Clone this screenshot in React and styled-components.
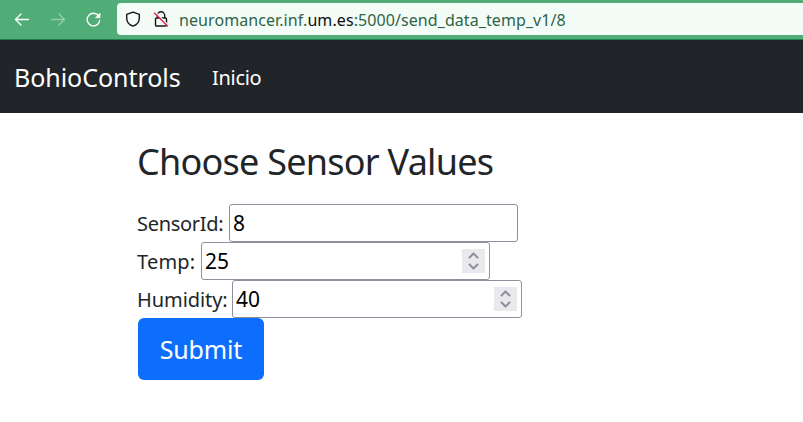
import React from "react";
import styled, { createGlobalStyle } from "styled-components";

const Global = createGlobalStyle`
  *, *::before, *::after { box-sizing: border-box; }
  html, body { margin: 0; background: #fff; overflow: hidden; }
  body { font-family: "Noto Sans", sans-serif; font-size: 20px; color: #212529; }
`;
const Page = styled.div`
  height: 422px;
  display: flex;
  flex-direction: column;
`;
const Toolbar = styled.div`
  height: 40px;
  flex: none;
  display: flex;
  align-items: flex-start;
  background: #50ad78;
  border-bottom: 1px solid #1c8048;
`;
const NavIcons = styled.div`
  width: 117px;
  height: 39px;
  display: flex;
  gap: 20px;
  padding: 12px 0 0 14px;
  color: #fff;
`;
const Icon = styled.svg`
  width: 16px;
  height: 16px;
  flex: none;
  fill: none;
  stroke: currentColor;
  stroke-width: 1.4;
  stroke-linecap: round;
  stroke-linejoin: round;
  overflow: visible;
  opacity: ${(p) => (p.$dim ? 0.4 : 1)};
`;
const UrlBar = styled.div`
  flex: 1;
  height: 32px;
  margin-top: 3px;
  padding: 8px 0 0 8px;
  display: flex;
  gap: 12px;
  background: #f4fcf8;
  border-radius: 4px 0 0 4px;
  color: #15141a;
`;
const Url = styled.span`
  margin: -3px 0 0 -2px;
  font-size: 16px;
  line-height: 24px;
  white-space: nowrap;
  color: #2f6346;
  letter-spacing: 0.08px;
`;
const Domain = styled.span`
  color: #0c0c0d;
`;
const Navbar = styled.nav`
  height: 73px;
  flex: none;
  display: flex;
  align-items: center;
  padding: 1px 0 0 14px;
  background: #212529;
  color: #fff;
`;
const Brand = styled.a`
  width: 198px;
  font-size: 25px;
  letter-spacing: -0.04px;
`;
const NavLink = styled.a`
  font-size: 20px;
  letter-spacing: -0.3px;
`;
const Main = styled.main`
  padding: 24px 0 0 137px;
`;
const Title = styled.h1`
  margin: 0 0 17px;
  font-size: 36px;
  font-weight: 400;
  letter-spacing: -0.75px;
  line-height: 50px;
  white-space: nowrap;
`;
const Row = styled.label`
  height: 38px;
  display: flex;
  align-items: center;
`;
const LabelText = styled.span`
  width: ${(p) => p.$width}px;
  letter-spacing: ${(p) => p.$spacing}px;
  white-space: nowrap;
`;
const Field = styled.span`
  width: ${(p) => p.$width}px;
  height: 38px;
  display: flex;
  align-items: center;
  justify-content: space-between;
  padding: 0 4px 0 3px;
  border: 1px solid #8f8f9d;
  border-radius: 3px;
  background: #fff;
`;
const Value = styled.input`
  width: 200px;
  height: 34px;
  padding: 0;
  border: 0;
  outline: 0;
  background: transparent;
  font: inherit;
  font-size: 21px;
  color: #000;
`;
const Spinner = styled.span`
  width: 23px;
  height: 24px;
  background: #e9e9ed;
  color: #8f8f9d;
`;
const Arrows = styled.svg`
  display: block;
  fill: none;
  stroke: currentColor;
  stroke-width: 2;
  stroke-linecap: round;
  stroke-linejoin: round;
`;
const Submit = styled.button`
  width: 126px;
  height: 62px;
  display: block;
  margin-left: 1px;
  padding: 0;
  border: 0;
  border-radius: 6px;
  background: #0d6efd;
  color: #fff;
  font: inherit;
  font-size: 25px;
  letter-spacing: -0.15px;
`;

const fields = [
  { label: "SensorId:", value: "8", width: 92, field: 289, spacing: -0.3 },
  { label: "Temp:", value: "25", width: 64, field: 289, spacing: 0.2 },
  { label: "Humidity:", value: "40", width: 95, field: 290, spacing: -0.08 },
].map((f) => ({ ...f, spin: f.label !== "SensorId:" }));

export default function App() {
  return (
    <Page>
      <Global />
      <Toolbar>
        <NavIcons>
          <Icon viewBox="0 0 16 16"><path d="M14.500 7.500H1.500M7 2L1.500 7.500L7 13" /></Icon>
          <Icon viewBox="0 0 16 16" $dim><path d="M1.500 7.500H14.500M9 2L14.500 7.500L9 13" /></Icon>
          <Icon viewBox="0 0 16 16">
            <path d="M12.800 4.200A6.300 6.300 0 1 0 13.700 8.400" />
            <path d="M14 1.600V5.700H9.900Z" fill="currentColor" strokeWidth="0.800" />
          </Icon>
        </NavIcons>
        <UrlBar>
          <Icon viewBox="0 0 16 16">
            <path d="M8 1.100L14.300 3.300V7C14.300 11 11.500 14 8 15.200C4.500 14 1.700 11 1.700 7V3.300Z" />
          </Icon>
          <Icon viewBox="0 0 16 16">
            <path d="M4.300 7V4.500A3.700 3.700 0 0 1 11.700 4.500V7M3.500 7H12.500A1 1 0 0 1 13.500 8V14A1 1 0 0 1 12.500 15H3.500A1 1 0 0 1 2.500 14V8A1 1 0 0 1 3.500 7Z" />
            <path d="M2.800 1.800L15.300 14.300" stroke="#f4fcf8" strokeWidth="1.500" />
            <path d="M1.500 2L14.500 15" stroke="#e22850" />
          </Icon>
          <Url>neuromancer.inf.<Domain>um.es</Domain>:5000/send_data_temp_v1/8</Url>
        </UrlBar>
      </Toolbar>
      <Navbar>
        <Brand>BohioControls</Brand>
        <NavLink>Inicio</NavLink>
      </Navbar>
      <Main>
        <Title>Choose Sensor Values</Title>
        {fields.map((f) => (
          <Row key={f.label}>
            <LabelText $width={f.width} $spacing={f.spacing}>{f.label}</LabelText>
            <Field $width={f.field}>
              <Value defaultValue={f.value} />
              {f.spin && (
                <Spinner>
                  <Arrows width="23" height="24" viewBox="0 0 23 24">
                    <path d="M7.500 8.500L11.500 4.500L15.500 8.500M7.500 15.500L11.500 19.500L15.500 15.500" />
                  </Arrows>
                </Spinner>
              )}
            </Field>
          </Row>
        ))}
        <Submit>Submit</Submit>
      </Main>
    </Page>
  );
}
